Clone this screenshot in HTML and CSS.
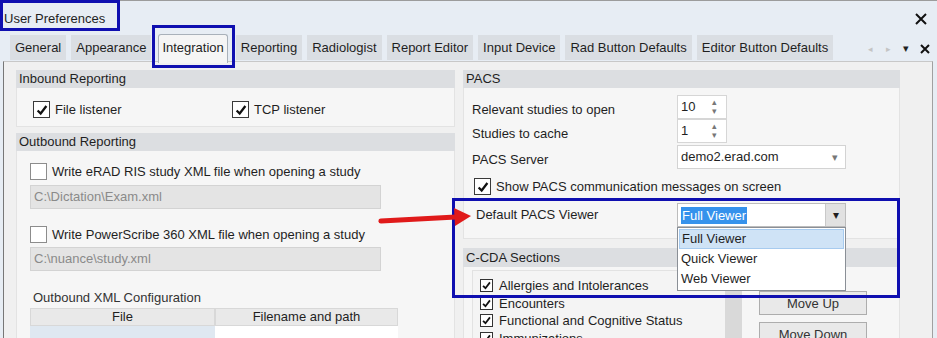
FILE: index.html
```html
<!DOCTYPE html>
<html>

<head>
    <title>User Preferences</title>

    <link rel="stylesheet" href="styles.css">

</head>

<body>
    <div class="window">
        <header class="titlebar">
            <span class="title">User Preferences</span>
            <svg class="close" width="12" height="12" viewBox="0 0 12 12">
                <path d="M1 1 L11 11 M11 1 L1 11" stroke="#111" stroke-width="2" fill="none" />
            </svg>
        </header>

        <nav class="tabs">
            <span class="tab">General</span>
            <span class="tab">Appearance</span>
            <span class="tab active">Integration</span>
            <span class="tab">Reporting</span>
            <span class="tab">Radiologist</span>
            <span class="tab">Report Editor</span>
            <span class="tab">Input Device</span>
            <span class="tab">Rad Button Defaults</span>
            <span class="tab">Editor Button Defaults</span>

            <div class="tab-tools">
                <span class="tool faint">&#9666;</span>
                <span class="tool faint">&#9656;</span>
                <span class="tool">&#9662;</span>
                <svg class="tool-x" width="10" height="10" viewBox="0 0 10 10">
                    <path d="M1 1 L9 9 M9 1 L1 9" stroke="#111" stroke-width="2" fill="none" />
                </svg>
            </div>
        </nav>

        <main class="content">
            <!-- левая колонка -->
            <div class="col">
                <div class="group-head">Inbound Reporting</div>
                <div class="group-body inbound">
                    <label class="check">
                        <span class="box"><svg viewBox="0 0 16 16"><path d="M3 8.5 L6.5 12 L13 3.5" /></svg></span>
                        File listener
                    </label>
                    <label class="check">
                        <span class="box"><svg viewBox="0 0 16 16"><path d="M3 8.5 L6.5 12 L13 3.5" /></svg></span>
                        TCP listener
                    </label>
                </div>

                <div class="group-head spaced">Outbound Reporting</div>
                <div class="group-body outbound">
                    <label class="check">
                        <span class="box empty"></span>
                        Write eRAD RIS study XML file when opening a study
                    </label>
                    <div class="path">C:\Dictation\Exam.xml</div>

                    <label class="check second">
                        <span class="box empty"></span>
                        Write PowerScribe 360 XML file when opening a study
                    </label>
                    <div class="path near">C:\nuance\study.xml</div>

                    <div class="sub-label">Outbound XML Configuration</div>
                    <div class="xml-table">
                        <div class="th">File</div>
                        <div class="th">Filename and path</div>
                        <div class="td tinted"></div>
                        <div class="td"></div>
                    </div>
                </div>
            </div>

            <!-- правая колонка -->
            <div class="col">
                <div class="group-head">PACS</div>
                <div class="group-body pacs">
                    <div class="fields">
                        <span class="field-label">Relevant studies to open</span>
                        <div class="spinner">
                            <span>10</span>
                            <span class="spin-arrows"><i>&#9652;</i><i>&#9662;</i></span>
                        </div>

                        <span class="field-label">Studies to cache</span>
                        <div class="spinner">
                            <span>1</span>
                            <span class="spin-arrows"><i>&#9652;</i><i>&#9662;</i></span>
                        </div>

                        <span class="field-label">PACS Server</span>
                        <div class="select">
                            <span>demo2.erad.com</span>
                            <span class="select-arrow">&#9662;</span>
                        </div>
                    </div>

                    <label class="check pacs-check">
                        <span class="box"><svg viewBox="0 0 16 16"><path d="M3 8.5 L6.5 12 L13 3.5" /></svg></span>
                        Show PACS communication messages on screen
                    </label>

                    <div class="fields viewer-row">
                        <span class="field-label viewer-label">Default PACS Viewer</span>
                        <div class="combo">
                            <span class="combo-value">Full Viewer</span>
                            <span class="combo-btn">&#9662;</span>

                            <div class="combo-list">
                                <div class="combo-item hover">Full Viewer</div>
                                <div class="combo-item">Quick Viewer</div>
                                <div class="combo-item">Web Viewer</div>
                            </div>
                        </div>
                    </div>
                </div>

                <div class="group-head cda-head">C-CDA Sections</div>
                <div class="group-body cda">
                    <div class="cda-list">
                        <div class="cda-items">
                            <label class="check small">
                                <span class="box"><svg viewBox="0 0 16 16"><path d="M3 8.5 L6.5 12 L13 3.5" /></svg></span>
                                Allergies and Intolerances
                            </label>
                            <label class="check small">
                                <span class="box"><svg viewBox="0 0 16 16"><path d="M3 8.5 L6.5 12 L13 3.5" /></svg></span>
                                Encounters
                            </label>
                            <label class="check small">
                                <span class="box"><svg viewBox="0 0 16 16"><path d="M3 8.5 L6.5 12 L13 3.5" /></svg></span>
                                Functional and Cognitive Status
                            </label>
                            <label class="check small">
                                <span class="box"><svg viewBox="0 0 16 16"><path d="M3 8.5 L6.5 12 L13 3.5" /></svg></span>
                                Immunizations
                            </label>
                        </div>
                        <div class="cda-scroll"></div>
                    </div>

                    <div class="cda-buttons">
                        <button>Move Up</button>
                        <button>Move Down</button>
                    </div>
                </div>
            </div>
        </main>

        <!-- пометки поверх скриншота -->
        <div class="mark mark-title"></div>
        <div class="mark mark-tab"></div>
        <div class="mark mark-viewer"></div>

        <svg class="arrow" width="96" height="24" viewBox="0 0 96 24">
            <path d="M5 15 L80 11" stroke="#e01a1a" stroke-width="5" stroke-linecap="round" fill="none" />
            <path d="M78 2 L95 10 L79 20 Z" fill="#e01a1a" />
        </svg>
    </div>
</body>

</html>
```

FILE: styles.css
```css
* {
    box-sizing: border-box;
}

body {
    margin: 0;
    background: #fff;
    color: #1f1f1f;

    font-family: "Liberation Sans", Arial, sans-serif;
    font-size: 13px;
}

.window {
    position: relative;
    display: flex;
    flex-direction: column;

    width: 937px;
    height: 338px;
    overflow: hidden;

    background: #e7edf4;
}

/* заголовок */

.titlebar {
    display: flex;
    flex-shrink: 0;
    align-items: center;
    justify-content: space-between;

    height: 33px;
    padding: 3px 10px 0 4px;

    border-top: 1px solid #9c9c9c;
}

/* вкладки */

.tabs {
    display: flex;
    flex-shrink: 0;
    align-items: flex-end;
    gap: 5px;

    height: 28px;
    padding-left: 10px;
}

.tab {
    height: 25px;
    margin-bottom: 1px;
    padding: 0 5px;

    background: #dadee3;

    line-height: 25px;
    white-space: nowrap;
}

.tab.active {
    position: relative;
    z-index: 1;

    height: 29px;
    margin: 0 3px -2px 2px;
    padding: 0 3px;

    background: #f5f5f5;
    border: 1px solid #a9b1ba;
    border-bottom: none;
    border-radius: 3px 3px 0 0;

    line-height: 26px;
}

.tab-tools {
    display: flex;
    align-items: center;

    height: 25px;
    margin-left: auto;
    padding-right: 7px;
}

.tool {
    width: 18px;

    font-size: 11px;
    text-align: center;
}

.tool.faint {
    color: #c4c4c4;
    font-size: 9px;
}

.tool-x {
    margin-left: 5px;
}

/* основная область */

.content {
    display: grid;
    grid-template-columns: 439px 437px;
    column-gap: 8px;
    align-items: start;

    flex: 1;
    min-height: 0;
    overflow: hidden;
    margin: 0 4px 0 3px;
    padding: 8px 0 0 12px;

    background: #f0f0f0;
    border-left: 1px solid #777;
    border-top: 1px solid #c8c8c8;
    border-right: 1px solid #a0a0a0;
}

.group-head {
    height: 18px;
    padding-left: 3px;

    background: #dcdee1;

    line-height: 18px;
}

.group-head.spaced {
    margin-top: 6px;
}

.group-body {
    background: #f6f6f6;
    border: 1px solid #e3e3e3;
    border-top: none;
}

/* чекбоксы */

.check {
    display: flex;
    align-items: center;
    gap: 5px;

    height: 17px;
    white-space: nowrap;
}

.box {
    display: flex;
    flex-shrink: 0;
    align-items: center;
    justify-content: center;

    width: 17px;
    height: 17px;

    background: #fff;
    border: 1px solid #3a3a3a;
}

.box.empty {
    border-color: #8c8c8c;
}

.box svg {
    width: 14px;
    height: 14px;

    fill: none;
    stroke: #111;
    stroke-width: 2.6;
}

.inbound {
    display: grid;
    grid-template-columns: 199px auto;

    height: 39px;
    padding: 13px 0 0 16px;
}

.outbound {
    height: 200px;
    padding: 12px 0 0 13px;
}

.path {
    width: 351px;
    height: 24px;
    margin-top: 5px;
    padding-left: 3px;

    background: #e4e4e4;
    border: 1px solid #d3d3d3;

    color: #8a8a8a;
    line-height: 22px;
}

.path.near {
    margin-top: 4px;
}

.check.second {
    margin-top: 17px;
}

.sub-label {
    margin: 19px 0 2px 3px;

    color: #333;
    line-height: 16px;
}

.xml-table {
    display: grid;
    grid-template-columns: 185px 183px;
    grid-template-rows: 18px 20px;
}

.th {
    background: #e9e9e9;
    border: 1px solid #d8d8d8;

    line-height: 16px;
    text-align: center;
}

.td {
    background: #fff;
}

.td.tinted {
    background: #dfe8f1;
}

/* PACS */

.pacs {
    padding: 7px 0 11px 8px;
}

.fields {
    display: grid;
    grid-template-columns: 205px 169px;
    align-items: end;
}

.field-label {
    padding-bottom: 1px;
    line-height: 16px;
}

.spinner {
    display: flex;
    justify-content: space-between;

    width: 50px;
    height: 24px;
    padding-left: 3px;

    background: #fff;
    border: 1px solid #d6d6d6;

    line-height: 22px;
}

.spin-arrows {
    display: flex;
    flex-direction: column;
    justify-content: center;

    width: 14px;

    color: #777;
    font-size: 9px;
    line-height: 9px;
}

.spin-arrows i {
    font-style: normal;
}

.select {
    display: flex;
    justify-content: space-between;

    height: 24px;
    margin-top: 2px;
    padding: 0 7px 0 3px;

    background: #fff;
    border: 1px solid #d3d3d3;

    line-height: 22px;
}

.select-arrow {
    color: #777;
    font-size: 11px;
}

.pacs-check {
    margin: 9px 0 0 2px;
}

.viewer-row {
    align-items: center;
    margin-top: 8px;
}

.viewer-label {
    padding: 0 0 0 4px;
}

.combo {
    position: relative;
    display: flex;
    align-items: center;
    justify-content: space-between;

    height: 24px;
    padding-left: 3px;

    background: #fff;
    border: 1px solid #bcbcbc;
}

.combo-value {
    padding: 0 1px;

    background: #3592ec;
    color: #fff;

    line-height: 17px;
}

.combo-btn {
    width: 20px;
    height: 22px;

    background: #e1e1e1;
    border-left: 1px solid #c9c9c9;

    font-size: 12px;
    line-height: 22px;
    text-align: center;
}

.combo-list {
    position: absolute;
    top: 23px;
    left: -1px;
    z-index: 3;

    width: 169px;
    padding: 1px;

    background: #fff;
    border: 1px solid #8a8f96;
}

.combo-item {
    height: 20px;
    padding-left: 2px;

    line-height: 20px;
}

.combo-item.hover {
    background: #cfe3f6;
    border: 1px solid #a7cbef;

    line-height: 18px;
}

/* C-CDA */

.cda-head {
    height: 19px;
    margin-top: 9px;

    line-height: 19px;
}

.cda {
    display: flex;

    height: 80px;
    padding: 3px 0 0 8px;
}

.cda-list {
    display: flex;

    width: 270px;

    background: #f4f4f4;
    border-left: 1px solid #e2e2e2;
    border-top: 1px solid #e2e2e2;
}

.cda-items {
    flex: 1;
    padding: 6px 0 0 7px;
}

.check.small {
    gap: 6px;
    height: 17.5px;
}

.check.small .box {
    width: 13px;
    height: 13px;
    border-color: #333;
}

.check.small .box svg {
    width: 11px;
    height: 11px;
}

.cda-scroll {
    width: 17px;
    background: #d9d9d9;
}

.cda-buttons {
    display: flex;
    flex-direction: column;
    gap: 7px;

    margin-left: 17px;
    padding-top: 21px;
}

button {
    width: 108px;
    height: 26px;

    background: #e9e9e9;
    border: 1px solid #adadad;

    color: #333;
    font-family: inherit;
    font-size: 13px;
}

/* пометки */

.mark {
    position: absolute;
    z-index: 5;

    border: 3px solid #0f0fb0;
}

.mark-title {
    left: 0;
    top: 0;
    width: 120px;
    height: 31px;
}

.mark-tab {
    left: 152px;
    top: 25px;
    width: 83px;
    height: 43px;
}

.mark-viewer {
    left: 452px;
    top: 198px;
    width: 448px;
    height: 100px;
}

.arrow {
    position: absolute;
    left: 376px;
    top: 206px;
    z-index: 5;
}
```
